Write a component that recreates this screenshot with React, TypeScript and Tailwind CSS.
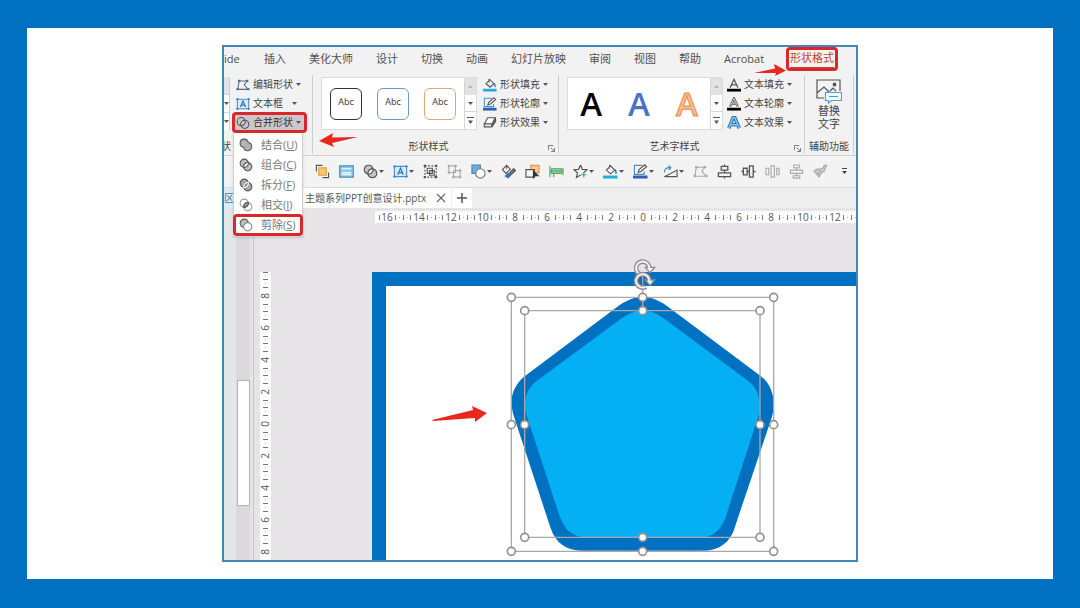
import React from "react";

type IconProps = { children: React.ReactNode; size?: string };

function Icon({ children, size = "size-[15px]" }: IconProps) {
  return (
    <svg viewBox="0 0 16 16" fill="none" stroke="#555" strokeWidth="1.2" className={`${size} shrink-0`} aria-hidden="true">
      {children}
    </svg>
  );
}

function Caret() {
  return (
    <svg viewBox="0 0 5 5" className="size-[5px] shrink-0" aria-hidden="true">
      <path d="M0 1h5L2.500 4z" fill="#555" />
    </svg>
  );
}

const editPoints = (color: string, point: string) => (
  <>
    <path d="M3.500 3.500h9M3.500 3.500L2 13M2 13h12M12.500 3.500L9.500 8L14 13" stroke={color} />
    <g fill={point} stroke="none">
      <path d="M2.200 2h2.600v2.600H2.200zM11.500 2h2.600v2.600h-2.600zM.6 11.500h2.600v2.600H.6zM12.800 11.500h2.600v2.600h-2.600z" />
    </g>
  </>
);

const textBox = (
  <>
    <path d="M1.500 2.500h13v11h-13z" fill="#d6eaf7" stroke="#4a90c4" />
    <path d="M5 11.500L8 4.500l3 7M6 9.300h4" stroke="#2f75b5" strokeWidth="1.300" />
    <path d="M.5 1.500h2v2h-2zM13.500 1.500h2v2h-2zM.5 12.500h2v2h-2zM13.500 12.500h2v2h-2z" fill="#2f75b5" stroke="none" />
  </>
);

const merge = (
  <>
    <circle cx="6" cy="6" r="4.700" fill="#c4c4c4" />
    <circle cx="10" cy="10" r="4.700" fill="#c4c4c4" />
    <path d="M10.700 5.300A4.700 4.700 0 0 1 5.300 10.700A4.700 4.700 0 0 1 10.700 5.300Z" fill="#f4f3f4" />
  </>
);

const mergePlain = (
  <>
    <circle cx="6" cy="6.500" r="4.700" />
    <circle cx="10" cy="9.500" r="4.700" />
  </>
);

const union = (
  <path d="M10.600 5.200A4.700 4.700 0 1 0 5.200 10.600A4.700 4.700 0 1 0 10.600 5.200Z" fill="#b3b3b3" />
);

const combine = (
  <>
    <circle cx="6" cy="6" r="4.700" fill="#bdbdbd" />
    <circle cx="10" cy="10" r="4.700" fill="#bdbdbd" />
    <path d="M10.700 5.300A4.700 4.700 0 0 1 5.300 10.700A4.700 4.700 0 0 1 10.700 5.300Z" fill="#fff" />
  </>
);

const fragment = (
  <>
    <circle cx="6" cy="6" r="4.700" fill="#a6a6a6" />
    <circle cx="10" cy="10" r="4.700" fill="#a6a6a6" />
    <path d="M10.700 5.300A4.700 4.700 0 0 1 5.300 10.700A4.700 4.700 0 0 1 10.700 5.300Z" fill="#8b8b8b" stroke="#fff" />
  </>
);

const intersect = (
  <>
    <circle cx="6" cy="6" r="4.700" stroke="#9a9a9a" />
    <circle cx="10" cy="10" r="4.700" stroke="#9a9a9a" />
    <path d="M10.700 5.300A4.700 4.700 0 0 1 5.300 10.700A4.700 4.700 0 0 1 10.700 5.300Z" fill="#999" />
  </>
);

const subtract = (
  <>
    <circle cx="6" cy="6" r="4.700" fill="#bdbdbd" />
    <circle cx="10" cy="10" r="4.700" fill="#fff" stroke="#8a8a8a" />
  </>
);

const bucket = (
  <>
    <path d="M3.500 6.500L8 2l4.500 4.500L8 10.500zM7 .8v4" />
    <path d="M12.500 6c1.600 1.200 1.600 3 1.200 4.500" stroke="#2f75b5" strokeWidth="1.500" />
    <path d="M0 12.300h15.500v3.200H0z" fill="#1fb0dc" stroke="none" />
  </>
);

const outlinePen = (
  <>
    <path d="M10 1.500H1.500v9.500H12V8" stroke="#4a90c4" />
    <path d="M5.500 9l1-3L12.500.8l2 2L8.500 8z" fill="#f3f2f3" />
    <path d="M0 12.300h15.500v3.200H0z" fill="#2f5fb8" stroke="none" />
  </>
);

const effects = (
  <>
    <path d="M5.500 2h8.500L10.500 9H1.500z" fill="#fff" strokeWidth="1.300" />
    <path d="M1.500 9v3.500h8.500l4.500-6.500L14 2M10.500 9L10 12.500" strokeWidth="1.300" />
    <path d="M10.500 9L14 2.500v4L10.200 12z" fill="#888" />
  </>
);

function LetterIcon({ kind }: { kind: "fill" | "outline" | "effect" }) {
  if (kind === "effect") {
    return (
      <Icon size="size-[14px]">
        <path d="M2 14L7 2h2l5 12M4.500 10h7" stroke="#2f75b5" strokeWidth="4" />
        <path d="M2 14L7 2h2l5 12M4.500 10h7" stroke="#8cc3ec" strokeWidth="1.600" />
      </Icon>
    );
  }
  return (
    <Icon size="size-[14px]">
      <path d="M3.500 11L8 1.500L12.500 11M5.200 7.800h5.600" strokeWidth={kind === "fill" ? 1.400 : 2.600} />
      {kind === "outline" && <path d="M3.500 11L8 1.500L12.500 11M5.200 7.800h5.600" stroke="#f3f2f3" strokeWidth=".8" />}
      <path d="M0 12.300h16v3.200H0z" fill="#000" stroke="none" />
    </Icon>
  );
}

function RedFrame() {
  return <span className="pointer-events-none absolute -inset-px z-30 rounded-sm border-[3px] border-[#d9282b]" />;
}

function GalleryScroll() {
  const cell = "flex flex-1 items-center justify-center border-b border-[#d8d6d8] last:border-b-0";
  return (
    <div className="flex w-[12px] flex-col border-l border-[#d8d6d8] bg-white">
      <span className="flex flex-1 items-center justify-center bg-[#e3e1e3]">
        <svg viewBox="0 0 5 5" className="size-[5px]"><path d="M0 4h5L2.500 1z" fill="#b5b5b5" /></svg>
      </span>
      <span className={cell}><Caret /></span>
      <span className={cell}>
        <svg viewBox="0 0 7 8" className="h-2 w-[7px]"><path d="M0 0h7v1H0zM1 3.500h5L3.500 7z" fill="#555" /></svg>
      </span>
    </div>
  );
}

function Launcher() {
  return (
    <button aria-label="更多选项" className="absolute right-[3px] bottom-[2px]">
      <svg viewBox="0 0 8 8" className="size-[7px]" fill="none" stroke="#666">
        <path d="M.5 6V.5H6M3 3l4 4M7.500 3.500v4h-4" />
      </svg>
    </button>
  );
}

function RowButton({ icon, text }: { icon: React.ReactNode; text: string }) {
  return (
    <button className="flex h-[19px] items-center gap-[3px]">
      {icon}
      <span>{text}</span>
      <Caret />
    </button>
  );
}

const mergeItems = [
  { name: "结合", key: "U", icon: union },
  { name: "组合", key: "C", icon: combine },
  { name: "拆分", key: "F", icon: fragment },
  { name: "相交", key: "I", icon: intersect },
  { name: "剪除", key: "S", icon: subtract, marked: true },
];

function MergeMenu() {
  return (
    <div role="menu" className="absolute top-full left-0 z-20 flex w-[70px] flex-col border border-t-0 border-[#d0ced0] bg-white pt-[3px] pb-px text-[11px] text-[#777] shadow">
      {mergeItems.map((item) => (
        <button key={item.name} role="menuitem" className="relative flex h-5 items-center gap-2 pl-[5px] whitespace-nowrap">
          <Icon size="size-[14px]">{item.icon}</Icon>
          <span>
            {item.name}(<u>{item.key}</u>)
          </span>
          {item.marked && <RedFrame />}
        </button>
      ))}
    </div>
  );
}

const tabs = ["插入", "美化大师", "设计", "切换", "动画", "幻灯片放映", "审阅", "视图", "帮助", "Acrobat"];

function RibbonTabs() {
  return (
    <nav className="flex h-6 items-center gap-[23px] text-[11px] whitespace-nowrap text-[#505050]">
      <button className="w-[17px] text-left">ide</button>
      {tabs.map((tab) => (
        <button key={tab}>{tab}</button>
      ))}
      <button className="relative ml-[3px] text-[#c2452d]">
        <span className="block border-b-2 border-[#b84a35] leading-[18px]">形状格式</span>
        <span className="pointer-events-none absolute -inset-x-1 -inset-y-[2px] rounded-sm border-[3px] border-[#d9282b]" />
        <svg viewBox="0 0 32 12" className="absolute top-[15px] -left-[36px] z-10 h-3 w-8" aria-hidden="true">
          <path d="M0 9L21 4.500L20 0L32 6.500L21 12L22 9z" fill="#e8271f" />
        </svg>
      </button>
    </nav>
  );
}

function Ribbon() {
  const group = "relative flex flex-col border-r border-[#cfcdcf]";
  const label = "relative mt-[6px] flex h-4 items-center justify-center";
  return (
    <div className="flex border-b border-[#d3d1d3] pt-1 pb-px text-[10px] whitespace-nowrap text-[#444]">
      <section className={`${group} w-[89px]`}>
        <div className="flex gap-[3px]">
          <div className="my-[2px] flex w-[6px] flex-col overflow-hidden border-r border-[#cfcdcf] bg-white">
            <span className="flex-1 bg-[#dfe2e6]" />
            <span className="flex flex-1 items-center border-y border-[#d8d6d8]"><Caret /></span>
            <span className="flex flex-1 items-center"><Caret /></span>
          </div>
          <div className="flex w-[73px] flex-col">
            <button className="flex h-[19px] items-center gap-[3px] pl-[3px]">
              <Icon size="size-[14px]">{editPoints("#666", "#2f75b5")}</Icon>编辑形状<Caret />
            </button>
            <button className="flex h-[19px] items-center gap-[3px] pl-[3px]">
              <Icon size="size-[14px]">{textBox}</Icon>
              <span className="min-w-9 text-left">文本框</span>
              <Caret />
            </button>
            <div className="relative">
              <button className="flex h-[19px] w-full items-center gap-[3px] bg-[#cbc7ca] pl-[3px] text-[#333]">
                <Icon size="size-[14px]">{mergePlain}</Icon>合并形状<Caret />
              </button>
              <MergeMenu />
              <RedFrame />
            </div>
          </div>
        </div>
        <div className="mt-[6px] flex h-4 w-[7px] items-center justify-end overflow-hidden">状</div>
      </section>

      <section className={`${group} w-[246px]`}>
        <div className="flex gap-[6px] pl-2">
          <div className="my-[2px] flex w-[156px] border border-[#dddbdd] bg-white">
            <div className="flex flex-1 items-center justify-center gap-[15px] text-[9px] text-[#333]">
              <button className="size-8 rounded-md border border-[#333] pb-1">Abc</button>
              <button className="size-8 rounded-md border border-[#6c99cc] pb-1">Abc</button>
              <button className="size-8 rounded-md border border-[#e6a471] pb-1">Abc</button>
            </div>
            <GalleryScroll />
          </div>
          <div className="flex flex-col">
            <RowButton icon={<Icon size="size-[14px]">{bucket}</Icon>} text="形状填充" />
            <RowButton icon={<Icon size="size-[14px]">{outlinePen}</Icon>} text="形状轮廓" />
            <RowButton icon={<Icon size="size-[14px]">{effects}</Icon>} text="形状效果" />
          </div>
        </div>
        <div className={`${label} pr-[14px]`}>
          形状样式
          <Launcher />
        </div>
        <svg viewBox="0 0 40 16" className="absolute top-[57px] left-[6px] h-4 w-10" aria-hidden="true">
          <path d="M0 9L14 1L13 5.500L39 5L13 11L15 15z" fill="#e8271f" />
        </svg>
      </section>

      <section className={`${group} w-[246px]`}>
        <div className="flex gap-[4px] pl-2">
          <div className="my-[2px] flex w-[156px] border border-[#dddbdd] bg-white">
            <div className="flex flex-1 items-center justify-center gap-[26px] font-['Open_Sans'] text-[33px] leading-none font-semibold">
              <button className="text-black">A</button>
              <button className="text-[#4a72c4]">A</button>
              <button className="text-[#f8bd8c] [-webkit-text-stroke:1px_#ea8a4a]">A</button>
            </div>
            <GalleryScroll />
          </div>
          <div className="flex flex-col">
            <RowButton icon={<LetterIcon kind="fill" />} text="文本填充" />
            <RowButton icon={<LetterIcon kind="outline" />} text="文本轮廓" />
            <RowButton icon={<LetterIcon kind="effect" />} text="文本效果" />
          </div>
        </div>
        <div className={`${label} pr-[14px]`}>
          艺术字样式
          <Launcher />
        </div>
      </section>

      <section className={`${group} w-[49px] items-center`}>
        <button className="flex h-[57px] flex-col items-center pt-1 text-[11px] leading-[13px]">
          <svg viewBox="0 0 26 25" className="h-[25px] w-[26px]" fill="none" stroke="#555" strokeWidth="1.200" aria-hidden="true">
            <path d="M8 19H1V1h23v11M1 14l7-6l6 6M14 12l3-3l3 3" />
            <circle cx="18.500" cy="5.500" r="1.300" fill="#555" />
            <path d="M9.500 13.500h16v8h-10l-3 2.500v-2.500h-3z" fill="#fff" stroke="#4a9fd4" />
            <path d="M13 17.500h9" stroke="#4a9fd4" />
          </svg>
          <span>替换</span>
          <span>文字</span>
        </button>
        <div className={label}>辅助功能</div>
      </section>
    </div>
  );
}

type Tool = { name: string; icon: React.ReactNode; menu?: boolean };

const tools: Tool[] = [
  {
    name: "上移一层",
    icon: (
      <>
        <path d="M1.500 8V1.500H8M14.500 9v5.500H8" />
        <path d="M4 4h8v8H4z" fill="#fbc766" stroke="#e0a040" />
      </>
    ),
  },
  {
    name: "版式",
    icon: (
      <>
        <path d="M.7 2h14.600v12H.7z" fill="#8ccbe8" stroke="#4a90b4" />
        <path d="M3 5h10M3 9.500h10M3 11.500h10" stroke="#fff" />
      </>
    ),
  },
  { name: "合并形状", icon: merge, menu: true },
  { name: "文本框", icon: textBox, menu: true },
  {
    name: "组合",
    icon: (
      <>
        <path d="M2 2h12v12H2z" strokeDasharray="2 1.500" />
        <path d="M4.500 4.500H10V10H4.500zM7 7h5v5H7z" />
        <path d="M.8.800h2.400v2.400H.8zM12.800.800h2.400v2.400h-2.400zM.8 12.800h2.400v2.400H.8zM12.800 12.800h2.400v2.400h-2.400z" fill="#555" stroke="none" />
      </>
    ),
  },
  {
    name: "取消组合",
    icon: (
      <g stroke="#aaa">
        <path d="M2 2h7v7H2zM7 7h7v7H7z" />
        <path d="M.8.800h2.400v2.400H.8zM8 .8h2.400v2.400H8zM.8 8h2.400v2.400H.8zM12.800 12.800h2.400v2.400h-2.400zM5.500 12.800h2.400v2.400H5.500zM12.800 5.500h2.400v2.400h-2.400z" fill="#aaa" stroke="none" />
      </g>
    ),
  },
  {
    name: "形状",
    icon: (
      <>
        <path d="M1 1h9v9H1z" fill="#69aede" stroke="#3f86bd" />
        <circle cx="10" cy="10" r="5" fill="#fff" stroke="#777" />
      </>
    ),
    menu: true,
  },
  {
    name: "取色器",
    icon: (
      <>
        <path d="M1.500 6L6 1.500l4 4L5.500 10zM6 1.500V5" />
        <path d="M8 11l5.500-6l2 2L9 13z" fill="#777" />
        <path d="M4 13c2 0 2-3 4-2.500s1.500 4-1 4.500" fill="#3d6ec0" stroke="#3d6ec0" />
      </>
    ),
  },
  {
    name: "选择",
    icon: (
      <>
        <path d="M6 1.500h9v8H6z" fill="#fbc58c" stroke="#e79a4c" />
        <path d="M1 6h9v8H1z" fill="#f7f6f7" />
        <path d="M9 7.500l5 5H11l-2 2z" fill="#333" stroke="#333" />
      </>
    ),
  },
  {
    name: "对齐",
    icon: (
      <>
        <path d="M2.500 5h11v5h-11z" fill="#9fd3a8" stroke="#56a568" />
        <path d="M1 2v12M15 4v8M5 10v4M1 7.500h14" stroke="#56a568" />
      </>
    ),
  },
  {
    name: "星形",
    icon: (
      <>
        <path d="M8 1l2 4.700l5 .4l-3.800 3.300M8 1L6 5.700l-5 .4l3.800 3.300L3.600 14.500L8 11.800" />
        <path d="M8.500 11.500h6M11.500 8.500v6" stroke="#4ea36a" />
      </>
    ),
    menu: true,
  },
  { name: "形状填充", icon: bucket, menu: true },
  { name: "形状轮廓", icon: outlinePen, menu: true },
  {
    name: "旋转",
    icon: (
      <>
        <path d="M1.500 13.500h13.500V6.500z" />
        <path d="M1.500 9C1.500 5 4 3.500 8 4M6 1.500L8.500 4L6 6.500" stroke="#3a8fb8" />
      </>
    ),
    menu: true,
  },
  { name: "编辑顶点", icon: editPoints("#aaa", "#aaa") },
  { name: "水平居中", icon: <path d="M4.500 2.500h7v4h-7zM1.500 9.500h13v4h-13zM8 .5v2M8 6.500v3M8 13.500v2" strokeWidth="1.400" /> },
  { name: "垂直居中", icon: <path d="M2.500 4.500h4v7h-4zM9 2h4v12H9zM.5 8h2M6.500 8H9M13 8h2.500" strokeWidth="1.400" /> },
  { name: "横向分布", icon: <path d="M1 4.500h3v7H1zM6.500 2h3.500v12H6.500zM12.500 4.500h2.500v7h-2.500z" stroke="#aaa" /> },
  { name: "纵向分布", icon: <path d="M5 1h6v3H5zM1.500 6.500h13V10h-13zM4.500 12.500h7v2.500h-7zM8 4v2.500M8 10v2.500" stroke="#aaa" /> },
  {
    name: "格式刷",
    icon: <path d="M1 7.500L5 5l4 4.500L6.500 14zM6.500 6L11 4l1-2.500l2.500 0L12 7.500L9 9.500M4 9l4 3" fill="#ccc" stroke="#aaa" />,
  },
];

function QuickToolbar() {
  return (
    <div className="flex h-8 items-center gap-[9px] border-b border-[#dddbdd] bg-[#f4f3f4] pl-[91px]">
      {tools.map((tool) => (
        <button key={tool.name} aria-label={tool.name} className="flex items-center gap-px">
          <Icon>{tool.icon}</Icon>
          {tool.menu && <Caret />}
        </button>
      ))}
      <button aria-label="自定义工具栏" className="flex w-[15px] justify-center">
        <svg viewBox="0 0 5 7" className="h-[7px] w-[5px]"><path d="M0 0h5v1H0zM0 3h5L2.500 6z" fill="#444" /></svg>
      </button>
    </div>
  );
}

function DocumentTabs() {
  return (
    <div className="flex h-5 items-stretch bg-[#efeeef] text-[10px] whitespace-nowrap text-[#555]">
      <span className="w-[11px] overflow-hidden bg-[#dcebf4] leading-5 text-[#3a7ca8]">区</span>
      <div className="flex items-center gap-[10px] bg-white pr-[5px] pl-[70px]">
        <span>主题系列PPT创意设计.pptx</span>
        <button aria-label="关闭">
          <svg viewBox="0 0 10 10" className="size-[10px]" stroke="#666" strokeWidth="1.100"><path d="M1 1l8 8M9 1L1 9" /></svg>
        </button>
      </div>
      <button aria-label="新建" className="ml-px flex w-5 items-center justify-center bg-white">
        <svg viewBox="0 0 10 10" className="size-[10px]" stroke="#555" strokeWidth="1.500"><path d="M5 0v10M0 5h10" /></svg>
      </button>
    </div>
  );
}

function RulerMarks({ values, start }: { values: number[]; start: number }) {
  return (
    <g>
      {values.map((value, i) => {
        const x = start + i * 32;
        return (
          <g key={i}>
            <text x={x} y="10" textAnchor="middle" fill="#555" className="text-[10px]">
              {Math.abs(value)}
            </text>
            <path d={`M${x + 8.500} 4v5M${x + 16.500} 4v5M${x + 23.500} 4v5`} stroke="#777" />
            <path d={`M${x + 12} 6.500h1M${x + 20} 6.500h1`} stroke="#aaa" />
          </g>
        );
      })}
    </g>
  );
}

const horizontal = [-16, -14, -12, -10, -8, -6, -4, -2, 0, 2, 4, 6, 8, 10, 12];
const vertical = [-8, -6, -4, -2, 0, 2, 4, 6, 8];

const outerHandles = [[64, 142], [458, 142], [851, 142], [64, 524], [851, 524], [64, 904], [458, 904], [851, 904]];
const innerHandles = [[104, 182], [458, 182], [810, 182], [104, 524], [810, 524], [104, 862], [458, 862], [810, 862]];

function Pentagon() {
  return (
    <svg viewBox="0 0 900 930" className="absolute -top-9 left-[104px] h-[310px] w-[300px]" fill="none" role="img" aria-label="五边形">
      <path
        d="M380 172Q458 108 536 172L808 375C850 405 858 455 846 500L735 830C722 878 685 902 640 902L275 902C230 902 197 880 182 835L72 500C56 450 66 410 105 378Z"
        fill="#0070c0"
      />
      <path
        d="M395 205Q458 158 521 205L775 393C805 415 812 450 808 490L712 785C700 832 675 862 630 862L285 862C245 862 220 835 206 790L108 490C100 450 110 415 140 393Z"
        fill="#04aff3"
      />
      <g stroke="#aaa7aa" strokeWidth="4">
        <path d="M64 142H851V904H64ZM104 182H810V862H104ZM458 75V182" />
      </g>
      <g fill="#fff" stroke="#929092" strokeWidth="5">
        {[...outerHandles, ...innerHandles].map(([x, y]) => (
          <circle key={`${x}-${y}`} cx={x} cy={y} r="12" />
        ))}
      </g>
      {[55, 93].map((y) => (
        <g key={y} transform={`translate(458 ${y})`}>
          <path d="M20 0A20 20 0 1 0 10 17" stroke="#8f8d90" strokeWidth="14" />
          <path d="M8 -3H36L22 13Z" fill="#f2f2f2" stroke="#8f8d90" strokeWidth="4" />
          <path d="M20 2A20 20 0 1 0 9 17.500" stroke="#f2f2f2" strokeWidth="6" />
        </g>
      ))}
    </svg>
  );
}

function Workspace() {
  return (
    <div className="flex min-h-80 flex-1 bg-[#e6e4e7]">
      <div className="w-3 bg-[#e3e7e8]" />
      <div className="flex w-[14px] flex-col bg-[#dbd9dc]">
        <div className="mt-[172px] ml-px h-[126px] border border-[#b5b3b5] bg-white" />
      </div>
      <div className="w-1 border-r border-[#c9c7ca]" />
      <div className="flex min-w-0 flex-1 flex-col overflow-hidden pt-[3px] pl-[6px]">
        <div className="ml-[115px] h-3 overflow-hidden bg-white">
          <svg className="h-3 w-full" aria-hidden="true">
            <RulerMarks values={horizontal} start={12} />
            <path d="M4.500 4v5" stroke="#777" />
          </svg>
        </div>
        <div className="mt-[49px] flex flex-1">
          <div className="relative w-[11px] overflow-hidden bg-white">
            <svg viewBox="0 0 11 288" className="absolute top-0 left-0 h-72 w-[11px]" aria-hidden="true">
              <g transform="translate(-1 280) rotate(-90)">
                <RulerMarks values={vertical} start={0} />
              </g>
            </svg>
          </div>
          <div className="relative ml-[101px] flex-1 border-t-[14px] border-l-[14px] border-[#0070c0] bg-white">
            <svg viewBox="0 0 56 16" className="absolute top-[120px] left-[46px] h-4 w-14" aria-hidden="true">
              <path d="M0 14L41 4L40 0L55 7L43 16L43 12L1 15z" fill="#e8271f" />
            </svg>
            <Pentagon />
          </div>
        </div>
      </div>
    </div>
  );
}

export default function App() {
  return (
    <div className="flex min-h-screen flex-col bg-[#0070c0] px-[27px] pt-7 pb-[29px] font-['Open_Sans','Noto_Sans_CJK_SC',sans-serif]">
      <main className="flex flex-1 flex-col items-center bg-white py-[17px]">
        <div className="flex w-full max-w-[636px] flex-1 flex-col overflow-hidden border-2 border-[#4188b8] bg-[#f3f2f3]">
          <RibbonTabs />
          <Ribbon />
          <QuickToolbar />
          <DocumentTabs />
          <Workspace />
        </div>
      </main>
    </div>
  );
}
